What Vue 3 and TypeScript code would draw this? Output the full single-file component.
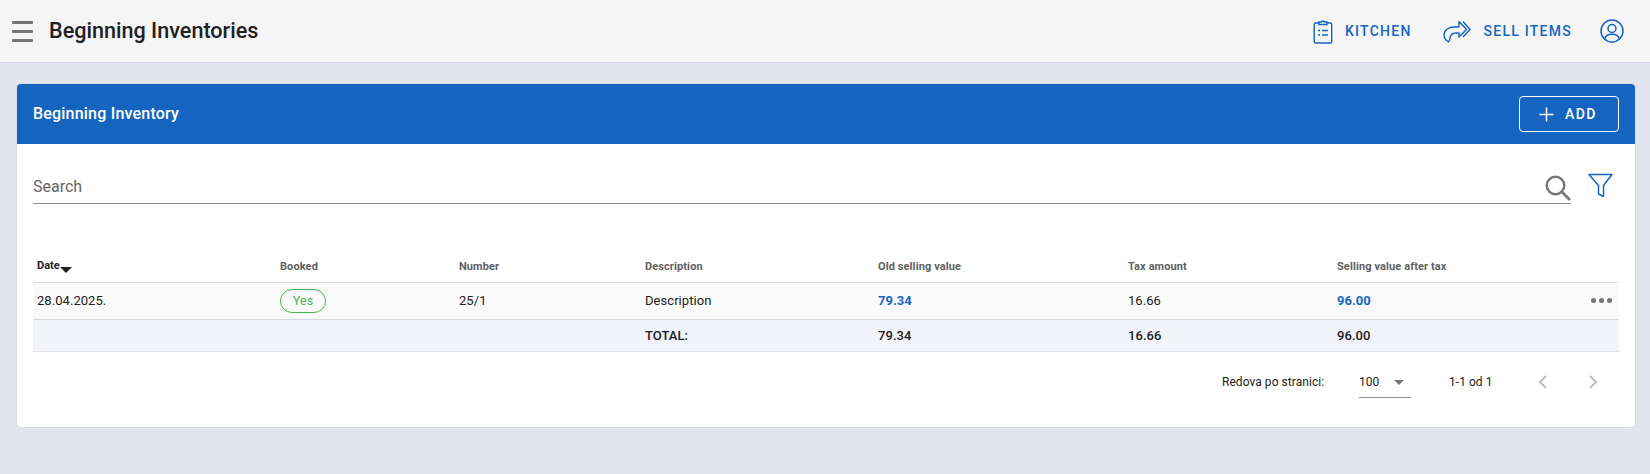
<script setup lang="ts">
interface Col { label: string; width: number }
const cols: Col[] = [
  { label: 'Date', width: 243 },
  { label: 'Booked', width: 179 },
  { label: 'Number', width: 186 },
  { label: 'Description', width: 233 },
  { label: 'Old selling value', width: 250 },
  { label: 'Tax amount', width: 209 },
  { label: 'Selling value after tax', width: 252 },
  { label: '', width: 34 },
]
</script>

<template>
  <div class="page">
    <header class="topbar">
      <div class="burger"><span></span><span></span><span></span></div>
      <h1 class="title">Beginning Inventories</h1>
      <nav class="actions">
        <a class="action kitchen">
          <svg width="20" height="25" viewBox="0 0 20 25" fill="none" stroke="#1565c0" stroke-width="1.4">
            <rect x="1.2" y="4" width="17.500" height="20" rx="1.5" />
            <path d="M6 4V3h2.400a1.600 1.600 0 0 1 3 0H14v2.500H6z" fill="#f5f5f5" />
            <path d="M5 11.500h2M5 16h2M9 11.500h6M9 16h6" stroke-width="1.600" />
          </svg>
          <span>KITCHEN</span>
        </a>
        <a class="action sell">
          <svg width="28" height="23" viewBox="0 0 28 23" fill="none" stroke="#1565c0" stroke-width="1.4" stroke-linejoin="round">
            <path d="M16 1.500 23.500 9.500 16 17V13H13C9 13 7 15 6.800 19.500L5.500 22C3 20.500 1 18 1 15 1 10.500 5.500 7 11 7h5z" />
            <path d="M20 1.500 27 9.500 20 17" />
          </svg>
          <span>SELL ITEMS</span>
        </a>
        <svg class="user" width="24" height="24" viewBox="0 0 24 24" fill="none" stroke="#1565c0" stroke-width="1.5">
          <circle cx="12" cy="12" r="11" />
          <circle cx="12" cy="9.500" r="4" />
          <path d="M4.500 20c1-3.600 4-4.800 7.500-4.800s6.500 1.200 7.500 4.800" />
        </svg>
      </nav>
    </header>

    <main class="content">
      <section class="card">
        <div class="card-head">
          <h2 class="card-title">Beginning Inventory</h2>
          <button class="add-btn" type="button">
            <svg width="15" height="15" viewBox="0 0 15 15" stroke="#fff" stroke-width="1.500"><path d="M7.500 0.500v14M0.500 7.500h14" /></svg>
            <span>ADD</span>
          </button>
        </div>

        <div class="card-body">
          <div class="search-row">
            <div class="search">
              <span class="search-label">Search</span>
              <svg width="26" height="26" viewBox="0 0 26 26" fill="none" stroke="#777" stroke-width="2.400">
                <circle cx="10.500" cy="10.500" r="8.800" />
                <path d="m17 17 8 8" stroke-width="2.600" />
              </svg>
            </div>
            <svg class="filter" width="25" height="25" viewBox="0 0 25 25" fill="none" stroke="#1565c0" stroke-width="1.500" stroke-linejoin="round">
              <path d="M1 1.500h23L15.500 12.500V23.500L10.500 21V12.500z" />
            </svg>
          </div>

          <table class="grid">
            <colgroup>
              <col v-for="c in cols" :key="c.label" :style="{ width: c.width + 'px' }" />
            </colgroup>
            <thead>
              <tr>
                <th class="sorted">Date<i class="sort"></i></th>
                <th v-for="c in cols.slice(1)" :key="c.label">{{ c.label }}</th>
              </tr>
            </thead>
            <tbody>
              <tr class="row">
                <td>28.04.2025.</td>
                <td><span class="chip">Yes</span></td>
                <td>25/1</td>
                <td>Description</td>
                <td class="link">79.34</td>
                <td>16.66</td>
                <td class="link">96.00</td>
                <td class="more"><span></span><span></span><span></span></td>
              </tr>
              <tr class="total">
                <td></td>
                <td></td>
                <td></td>
                <td>TOTAL:</td>
                <td>79.34</td>
                <td>16.66</td>
                <td>96.00</td>
                <td></td>
              </tr>
            </tbody>
          </table>

          <div class="pager">
            <span class="pager-label">Redova po stranici:</span>
            <div class="select"><span>100</span><i class="caret"></i></div>
            <span class="pager-range">1-1 od 1</span>
            <svg class="chev" width="12" height="16" viewBox="0 0 12 16" fill="none" stroke="#bdbdbd" stroke-width="2"><path d="M9 2 3 8l6 6" /></svg>
            <svg class="chev next" width="12" height="16" viewBox="0 0 12 16" fill="none" stroke="#bdbdbd" stroke-width="2"><path d="m3 2 6 6-6 6" /></svg>
          </div>
        </div>
      </section>
    </main>
  </div>
</template>

<style>
html, body { margin: 0; background: #e2e5ee; }
</style>

<style scoped>
.page {
  width: 1650px;
  height: 474px;
  overflow: hidden;
  background: #e2e5ee;
  font-family: Roboto, "Liberation Sans", sans-serif;
  color: #212121;
}
.topbar {
  height: 62px;
  box-sizing: content-box;
  border-bottom: 1px solid #d5d9e4;
  background: #f5f5f5;
  display: flex;
  align-items: center;
  padding: 0 16px 0 12px;
}
.burger { width: 21px; display: flex; flex-direction: column; gap: 6px; }
.burger span { height: 3px; background: #757575; border-radius: 1px; }
.title { margin: 0 0 2px 16px; font-size: 21.600px; font-weight: 500; letter-spacing: 0; color: #212121; }
.actions { margin-left: auto; display: flex; align-items: center; }
.action {
  display: flex;
  align-items: center;
  color: #1565c0;
  font-size: 14px;
  font-weight: 500;
  letter-spacing: 1.250px;
}
.kitchen { gap: 12px; margin-right: 31px; }
.sell { gap: 13px; margin-right: 28px; }
.user { display: block; margin-right: 10px; }
.content { padding: 21px 15px 0 17px; }
.card {
  background: #fff;
  border-radius: 4px;
  height: 343px;
  box-shadow: 0 0 0 1px #d9dce6;
  overflow: hidden;
}
.card-head {
  height: 60px;
  background: #1565c0;
  display: flex;
  align-items: center;
  justify-content: space-between;
  padding: 0 16px;
}
.card-title { margin: 0 0 2px; color: #fff; font-size: 16px; font-weight: 500; letter-spacing: 0.200px; }
.add-btn {
  width: 100px;
  height: 36px;
  box-sizing: border-box;
  border: 1px solid #fff;
  border-radius: 4px;
  padding: 0 2px 0 0;
  background: transparent;
  color: #fff;
  font: 500 14px Roboto, sans-serif;
  letter-spacing: 1.400px;
  display: flex;
  align-items: center;
  justify-content: center;
  gap: 11px;
}
.card-body { padding: 0 16px; }
.search-row { display: flex; align-items: flex-start; padding-top: 29px; height: 86px; box-sizing: border-box; }
.search {
  flex: 1;
  height: 30px;
  border-bottom: 1px solid #8c8c8c;
  display: flex;
  align-items: center;
  justify-content: space-between;
  box-sizing: content-box;
}
.search-label { font-size: 16px; color: #666; margin-bottom: 3px; }
.filter { margin: 0 6px 0 17px; }
.grid { width: 1586px; border-collapse: collapse; table-layout: fixed; font-size: 13px; letter-spacing: 0.050px; }
.grid thead tr { height: 52px; }
.grid th {
  text-align: left;
  font-size: 11px;
  font-weight: 700;
  letter-spacing: 0.100px;
  color: #616161;
  padding: 21px 4px 0;
  vertical-align: middle;
}
.grid th.sorted { color: #212121; letter-spacing: 0; }
.sort {
  display: inline-block;
  width: 0;
  height: 0;
  border-left: 6px solid transparent;
  border-right: 6px solid transparent;
  border-top: 6px solid #212121;
  vertical-align: -4px;
}
.grid td { padding: 0 4px; }
.row { height: 37px; background: #fafafa; border-top: 1px solid #e0e0e0; border-bottom: 1px solid #d5d7de; }
.total { height: 32px; background: #f2f3fb; border-bottom: 1px solid #e0e0e0; font-weight: 500; }
.chip {
  display: inline-block;
  box-sizing: border-box;
  width: 46px;
  height: 24px;
  line-height: 22px;
  text-align: center;
  border: 1px solid #4caf50;
  border-radius: 12px;
  color: #4caf50;
  font-size: 12.500px;
}
.link { color: #1565c0; font-weight: 700; }
.grid td.more { padding: 0 0 0 6px; }
.more { white-space: nowrap; }
.more span {
  display: inline-block;
  width: 5px;
  height: 5px;
  border-radius: 50%;
  background: #757575;
  margin-right: 3px;
  vertical-align: 2px;
}
.pager {
  display: flex;
  align-items: center;
  height: 47px;
  padding: 7px 0 0 1189px;
  font-size: 12px;
  letter-spacing: 0.050px;
  color: #212121;
}
.pager-label { width: 137px; }
.select {
  width: 52px;
  height: 31px;
  margin-top: 1px;
  border-bottom: 1px solid #8c8c8c;
  display: flex;
  align-items: center;
  justify-content: space-between;
  padding-right: 7px;
  box-sizing: border-box;
  font-size: 12px;
}
.caret {
  width: 0;
  height: 0;
  border-left: 5px solid transparent;
  border-right: 5px solid transparent;
  border-top: 5px solid #757575;
  margin-top: 1px;
}
.pager-range { margin-left: 38px; width: 88px; }
.chev { display: block; }
.next { margin-left: 38px; }
</style>
